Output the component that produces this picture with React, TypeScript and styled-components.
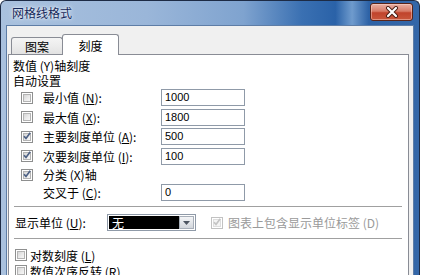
import React from "react";
import styled, { createGlobalStyle } from "styled-components";

const GlobalStyle = createGlobalStyle`
  html, body {
    margin: 0;
    padding: 0;
    background: #ffffff;
    overflow: hidden;
  }
  body {
    font-family: "Noto Sans CJK SC", "Liberation Sans", sans-serif;
    font-size: 12px;
    color: #000;
  }
`;

const Window = styled.div`
  width: 418px;
  height: 290px;
  border: 1px solid #1d2b45;
  border-bottom: none;
  border-radius: 6px 6px 0 0;
  background: linear-gradient(
    90deg,
    #a9c1de 0%,
    #9ab6d9 35%,
    #7fa3cf 58%,
    #3a70b2 72%,
    #2a62a8 80%,
    #6f9bcd 84%,
    #2d62a6 88%,
    #3467a8 100%
  );
  display: flex;
  flex-direction: column;
`;

const TitleBar = styled.div`
  height: 24px;
  display: flex;
  align-items: flex-start;
  justify-content: space-between;
  padding-left: 11px;
  padding-right: 6px;
`;

const Title = styled.div`
  font-size: 12px;
  line-height: 24px;
  color: #15285a;
  text-shadow: 0 0 5px rgba(255, 255, 255, 0.9), 0 0 2px rgba(255, 255, 255, 0.8);
`;

const CloseButton = styled.div`
  margin-top: 2px;
  width: 41px;
  height: 16px;
  border: 1px solid #5a2418;
  border-radius: 3px;
  background: linear-gradient(180deg, #e9b0a4 0%, #d77a66 45%, #c0432c 55%, #c9573c 100%);
  box-shadow: inset 0 0 0 1px rgba(255, 220, 210, 0.45);
  display: flex;
  align-items: center;
  justify-content: center;
`;

const Frame = styled.div`
  flex: 1;
  padding: 0 5px 0 5px;
  display: flex;
`;

const Client = styled.div`
  flex: 1;
  background: #f0f0f0;
  border: 1px solid #5e7da6;
  border-bottom: none;
  padding: 8px 4px 0 1px;
  display: flex;
  flex-direction: column;
`;

const TabStrip = styled.div`
  height: 21px;
  display: flex;
  align-items: flex-end;
  padding-left: 3px;
  margin-bottom: -1px;
  position: relative;
  z-index: 1;
`;

const Tab = styled.div<{ $active?: boolean }>`
  box-sizing: border-box;
  display: flex;
  align-items: center;
  justify-content: center;
  border: 1px solid #898c95;
  border-bottom: none;
  border-radius: 3px 3px 0 0;
  font-size: 12px;
  width: ${({ $active }) => ($active ? "57px" : "52px")};
  height: ${({ $active }) => ($active ? "21px" : "17px")};
  margin-bottom: ${({ $active }) => ($active ? "0" : "1px")};
  margin-left: ${({ $active }) => ($active ? "-1px" : "0")};
  padding-top: ${({ $active }) => ($active ? "0" : "1px")};
  background: ${({ $active }) =>
    $active ? "#ffffff" : "linear-gradient(180deg, #f4f4f4 0%, #ececec 50%, #e2e2e2 100%)"};
`;

const Panel = styled.div`
  flex: 1;
  background: #ffffff;
  border: 1px solid #898c95;
  border-bottom: none;
  padding: 3px 6px 0 4px;
  display: flex;
  flex-direction: column;
`;

const Heading = styled.div`
  height: 15px;
  line-height: 15px;
`;

const SubHeading = styled.div`
  height: 14px;
  line-height: 14px;
  margin-top: 1px;
`;

const FieldRow = styled.div<{ $h?: number; $indent?: number }>`
  height: ${({ $h }) => $h ?? 19.5}px;
  display: flex;
  align-items: center;
  padding-left: ${({ $indent }) => $indent ?? 8}px;
`;

const FieldLabel = styled.span<{ $w: number; $offset?: number }>`
  width: ${({ $w }) => $w}px;
  margin-left: ${({ $offset }) => $offset ?? 0}px;
  white-space: nowrap;
`;

const TextBox = styled.div`
  box-sizing: border-box;
  width: 84px;
  height: 17px;
  border: 1px solid #8f9aa8;
  background: #fff;
  padding-left: 3px;
  font-family: "Liberation Sans", sans-serif;
  font-size: 11px;
  line-height: 15px;
`;

const Box = styled.span<{ $disabled?: boolean }>`
  box-sizing: border-box;
  flex: none;
  width: 12px;
  height: 12px;
  border: 1px solid ${({ $disabled }) => ($disabled ? "#c2c2c2" : "#8e8f8f")};
  background: #fff;
  padding: 1px;
  display: inline-flex;
`;

const BoxInner = styled.span<{ $disabled?: boolean }>`
  flex: 1;
  border: 1px solid ${({ $disabled }) => ($disabled ? "#dedede" : "#b4b4b4")};
  background: ${({ $disabled }) =>
    $disabled ? "#f4f4f4" : "linear-gradient(135deg, #d6d6d6 0%, #ececec 60%, #f6f6f6 100%)"};
  position: relative;
`;

const CheckMark = styled.svg`
  position: absolute;
  left: -2px;
  top: -3px;
`;

const Separator = styled.div`
  height: 1px;
  background: #a0a0a0;
  margin-left: 1px;
`;

const UnitRow = styled.div`
  height: 17px;
  margin: 7px 0 7px 0;
  display: flex;
  align-items: center;
  padding-left: 2px;
`;

const Combo = styled.div`
  box-sizing: border-box;
  width: 89px;
  height: 17px;
  border: 1px solid #8f9aa8;
  background: #fff;
  display: flex;
  padding: 1px;
`;

const ComboValue = styled.div`
  flex: 1;
  background: #000;
  color: #fff;
  font-size: 12px;
  line-height: 13px;
  padding-left: 3px;
`;

const ComboArrow = styled.div`
  box-sizing: border-box;
  width: 15px;
  border: 1px solid #a7aeb8;
  background: linear-gradient(180deg, #f4f5f7 0%, #e3e6ea 50%, #d2d6dc 100%);
  display: flex;
  align-items: center;
  justify-content: center;
`;

const Option = styled.label<{ $disabled?: boolean; $gap: number; $offset?: number }>`
  display: flex;
  align-items: center;
  gap: ${({ $gap }) => $gap}px;
  margin-left: ${({ $offset }) => $offset ?? 0}px;
  color: ${({ $disabled }) => ($disabled ? "#9a9a9a" : "#000")};
  white-space: nowrap;
`;

const OptionRow = styled.div`
  height: 16px;
  display: flex;
  align-items: center;
  padding-left: 2px;
`;

const Spacer = styled.div<{ $h: number }>`
  height: ${({ $h }) => $h}px;
`;

function Check({ checked, disabled }: { checked?: boolean; disabled?: boolean }) {
  return (
    <Box $disabled={disabled}>
      <BoxInner $disabled={disabled}>
        {checked && (
          <CheckMark width="10" height="10" viewBox="0 0 10 10">
            <path
              d="M2 5.2 L4 7.4 L8.2 1.8"
              fill="none"
              stroke={disabled ? "#c4c4c4" : "#4d6185"}
              strokeWidth="1.7"
            />
          </CheckMark>
        )}
      </BoxInner>
    </Box>
  );
}

const fields = [
  { label: "最小值", key: "N", value: "1000", checked: false },
  { label: "最大值", key: "X", value: "1800", checked: false },
  { label: "主要刻度单位", key: "A", value: "500", checked: true },
  { label: "次要刻度单位", key: "I", value: "100", checked: true },
];

export default function App() {
  return (
    <>
      <GlobalStyle />
      <Window>
        <TitleBar>
          <Title>网格线格式</Title>
          <CloseButton>
            <svg width="14" height="12" viewBox="0 0 14 12">
              <path d="M3 2 L11 10 M11 2 L3 10" stroke="#4a1c12" strokeWidth="4" strokeLinecap="round" />
              <path d="M3 2 L11 10 M11 2 L3 10" stroke="#ffffff" strokeWidth="2.2" strokeLinecap="round" />
            </svg>
          </CloseButton>
        </TitleBar>
        <Frame>
          <Client>
            <TabStrip>
              <Tab>图案</Tab>
              <Tab $active>刻度</Tab>
            </TabStrip>
            <Panel>
              <Heading>数值 (Y)轴刻度</Heading>
              <SubHeading>自动设置</SubHeading>
              {fields.map((f) => (
                <FieldRow key={f.key}>
                  <Check checked={f.checked} />
                  <FieldLabel $w={118} $offset={10}>
                    {f.label} (<u>{f.key}</u>):
                  </FieldLabel>
                  <TextBox>{f.value}</TextBox>
                </FieldRow>
              ))}
              <FieldRow $h={17}>
                <Check checked />
                <FieldLabel $w={118} $offset={10}>
                  分类 (X)轴
                </FieldLabel>
              </FieldRow>
              <FieldRow $h={19} $indent={30}>
                <FieldLabel $w={118}>
                  交叉于 (<u>C</u>):
                </FieldLabel>
                <TextBox>0</TextBox>
              </FieldRow>
              <Spacer $h={4} />
              <Separator />
              <UnitRow>
                <FieldLabel $w={92}>
                  显示单位 (<u>U</u>):
                </FieldLabel>
                <Combo>
                  <ComboValue>无</ComboValue>
                  <ComboArrow>
                    <svg width="7" height="4" viewBox="0 0 7 4">
                      <path d="M0 0 L7 0 L3.5 4 Z" fill="#4d5561" />
                    </svg>
                  </ComboArrow>
                </Combo>
                <Option $disabled $gap={5} $offset={15}>
                  <Check checked disabled />
                  <span>图表上包含显示单位标签 (D)</span>
                </Option>
              </UnitRow>
              <Separator />
              <Spacer $h={8} />
              <OptionRow>
                <Option $gap={3}>
                  <Check />
                  <span>
                    对数刻度 (<u>L</u>)
                  </span>
                </Option>
              </OptionRow>
              <OptionRow>
                <Option $gap={3}>
                  <Check />
                  <span>
                    数值次序反转 (<u>R</u>)
                  </span>
                </Option>
              </OptionRow>
            </Panel>
          </Client>
        </Frame>
      </Window>
    </>
  );
}
